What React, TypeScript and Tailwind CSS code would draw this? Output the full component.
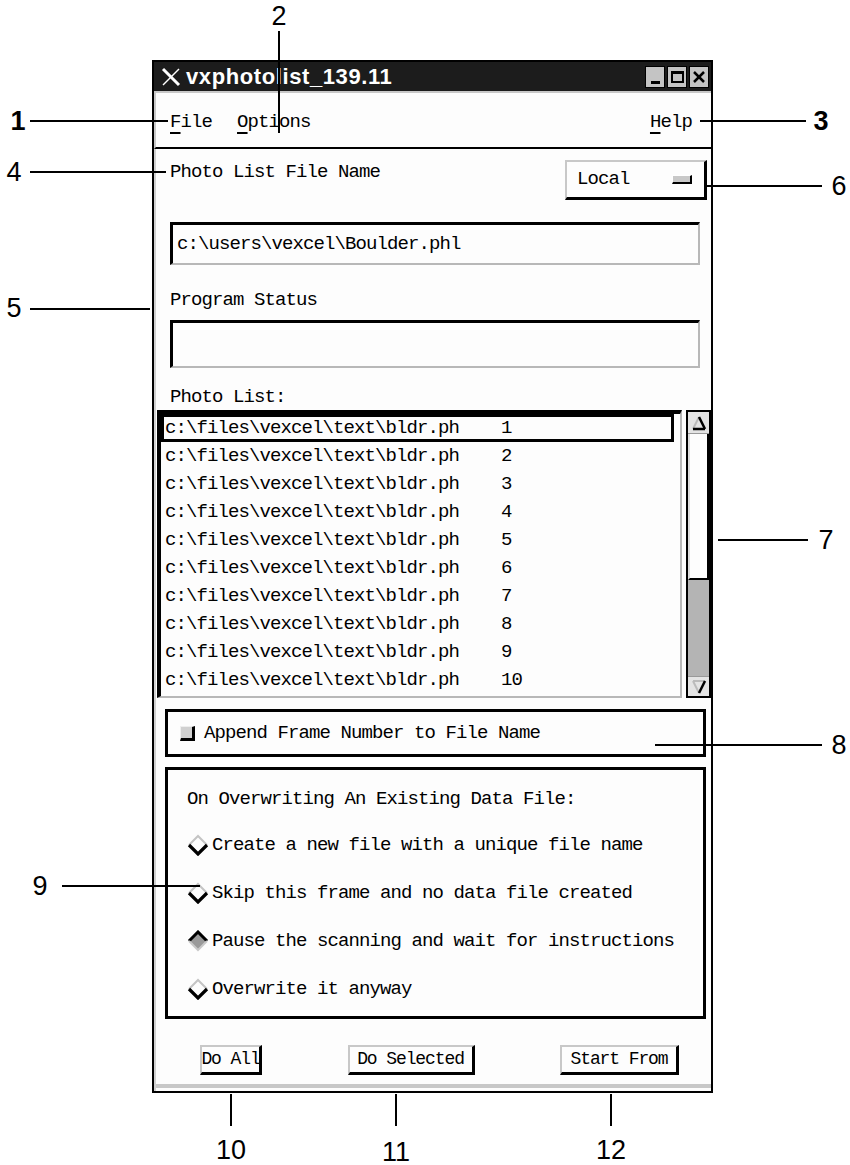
import React from "react";

const rows = Array.from({ length: 10 }, (_, i) => i + 1);

function Diamond({ selected }: { selected?: boolean }) {
  return (
    <svg width="22" height="22" viewBox="0 0 22 22" className="shrink-0">
      {selected ? (
        <>
          <polygon points="11,2 20,11 11,20 2,11" fill="#9a9a9a" />
          <polyline points="2,11 11,2 20,11" fill="none" stroke="#000" strokeWidth="3" />
          <polyline points="2,11 11,20 20,11" fill="none" stroke="#c8c8c8" strokeWidth="2" />
        </>
      ) : (
        <>
          <polyline points="2,11 11,2 20,11" fill="none" stroke="#c4c4c4" strokeWidth="2" />
          <polyline points="2,11 11,20 20,11" fill="none" stroke="#000" strokeWidth="3.2" />
        </>
      )}
    </svg>
  );
}

function Arrow({ up }: { up?: boolean }) {
  return (
    <svg width="18" height="18" viewBox="0 0 18 18">
      {up ? (
        <>
          <line x1="3" y1="15" x2="9" y2="3" stroke="#bbb" strokeWidth="2" />
          <line x1="9" y1="3" x2="15" y2="15" stroke="#000" strokeWidth="2.5" />
          <line x1="3" y1="15" x2="15" y2="15" stroke="#000" strokeWidth="2.5" />
        </>
      ) : (
        <>
          <line x1="3" y1="3" x2="15" y2="3" stroke="#bbb" strokeWidth="2" />
          <line x1="3" y1="3" x2="9" y2="15" stroke="#bbb" strokeWidth="2" />
          <line x1="15" y1="3" x2="9" y2="15" stroke="#000" strokeWidth="2.5" />
        </>
      )}
    </svg>
  );
}

function Field({ text, h }: { text?: string; h: string }) {
  return (
    <div
      className={`ml-[14px] mr-[11px] ${h} bg-[#fdfdfd] border-t-[3px] border-l-[3px] border-t-black border-l-black border-b-2 border-r-2 border-b-[#b8b8b8] border-r-[#b8b8b8] flex items-center pl-[4px]`}
    >
      {text}
    </div>
  );
}

function Btn({ label, w }: { label: string; w: string }) {
  return (
    <div
      className={`${w} h-[30px] bg-[#fdfdfd] border-t-2 border-l-2 border-t-[#c8c8c8] border-l-[#c8c8c8] border-b-[3px] border-r-[3px] border-b-black border-r-black flex items-center justify-center whitespace-nowrap text-[18px] tracking-[-1.1px]`}
    >
      {label}
    </div>
  );
}

function Option({ label, selected, first }: { label: string; selected?: boolean; first?: boolean }) {
  return (
    <div className={`${first ? "mt-[25px]" : "mt-[26px]"} h-[22px] flex items-center gap-[3px]`}>
      <Diamond selected={selected} />
      <span className="leading-[20px]">{label}</span>
    </div>
  );
}

function Window() {
  return (
    <div className="w-[561px] border-2 border-black bg-white flex flex-col">
      {/* title bar */}
      <div className="h-[29px] bg-[#1c1c1c] flex items-center pl-[6px] pr-[2px]">
        <svg width="22" height="20" viewBox="0 0 22 20" className="shrink-0">
          <line x1="3" y1="2" x2="19" y2="18" stroke="#fff" strokeWidth="3" />
          <line x1="19" y1="2" x2="3" y2="18" stroke="#fff" strokeWidth="1.5" />
        </svg>
        <span className="ml-[4px] text-white font-['Liberation_Sans',Arial,sans-serif] font-bold text-[22px] leading-none tracking-[0.6px]">
          vxphotolist_139.11
        </span>
        <div className="ml-auto flex gap-[2px]">
          <div className="w-[20px] h-[22px] bg-[#c4c4c4] border border-black flex items-end justify-center pb-[3px]">
            <div className="w-[9px] h-[3px] bg-black" />
          </div>
          <div className="w-[20px] h-[22px] bg-[#c4c4c4] border border-black flex items-center justify-center">
            <div className="w-[13px] h-[12px] border-2 border-black border-t-[3px]" />
          </div>
          <div className="w-[20px] h-[22px] bg-[#c4c4c4] border border-black flex items-center justify-center">
            <svg width="14" height="14" viewBox="0 0 14 14">
              <line x1="2" y1="2" x2="12" y2="12" stroke="#000" strokeWidth="2.5" />
              <line x1="12" y1="2" x2="2" y2="12" stroke="#000" strokeWidth="2.5" />
            </svg>
          </div>
        </div>
      </div>
      {/* menu bar */}
      <div className="h-[58px] border-t-2 border-l-2 border-[#c8c8c8] border-b-2 border-b-black bg-[#fdfdfd] flex items-center pl-[14px] pr-[19px] pt-[4px]">
        <span>
          <span className="underline underline-offset-[5px] decoration-2">F</span>ile
        </span>
        <span className="ml-[25px]">
          <span className="underline underline-offset-[5px] decoration-2">O</span>ptions
        </span>
        <span className="ml-auto">
          <span className="underline underline-offset-[5px] decoration-2">H</span>elp
        </span>
      </div>
      {/* body */}
      <div className="bg-[#fdfdfd] border-l-2 border-[#d0d0d0] flex flex-col">
        <div className="flex justify-between items-start pt-[11px] pl-[14px] pr-[4px]">
          <span className="mt-[2px] leading-[20px]">Photo List File Name</span>
          <div className="w-[142px] h-[40px] border-t-2 border-l-2 border-t-[#c8c8c8] border-l-[#c8c8c8] border-b-[3px] border-r-[3px] border-b-black border-r-black bg-[#fdfdfd] flex items-center pl-[10px] pr-[12px]">
            <span>Local</span>
            <span className="ml-auto w-[20px] h-[9px] bg-[#c8c8c8] border-t border-l border-t-white border-l-white border-b-2 border-r-2 border-b-black border-r-black" />
          </div>
        </div>
        <div className="mt-[22px]">
          <Field h="h-[43px]" text="c:\users\vexcel\Boulder.phl" />
        </div>
        <div className="mt-[25px] pl-[14px] leading-[20px]">Program Status</div>
        <div className="mt-[10px]">
          <Field h="h-[48px]" />
        </div>
        <div className="mt-[19px] pl-[14px] leading-[20px]">Photo List:</div>
        {/* list */}
        <div className="mt-[3px] flex pl-[1px]">
          <div className="w-[525px] h-[288px] border-t-[4px] border-l-[4px] border-t-black border-l-black border-b-2 border-r-2 border-b-[#b8b8b8] border-r-[#b8b8b8] bg-[#fdfdfd] flex flex-col">
            {rows.map((n) => (
              <div
                key={n}
                className={`h-[28px] shrink-0 flex items-center pl-[1px] whitespace-pre ${
                  n === 1 ? "border-[3px] border-black mr-[6px]" : "border-[3px] border-transparent"
                }`}
              >
                {`c:\\files\\vexcel\\text\\bldr.ph    ${n}`}
              </div>
            ))}
          </div>
          <div className="ml-[4px] w-[25px] h-[288px] border-2 border-black bg-[#b4b4b4] flex flex-col">
            <div className="h-[22px] bg-[#e4e4e4] flex items-center justify-center border-b border-[#999]">
              <Arrow up />
            </div>
            <div className="h-[146px] bg-[#fdfdfd] border-l-2 border-l-[#ddd] border-b-2 border-b-black border-r-2 border-r-black" />
            <div className="flex-1 bg-[#b4b4b4]" />
            <div className="h-[20px] bg-[#e4e4e4] flex items-center justify-center border-t border-[#999]">
              <Arrow />
            </div>
          </div>
        </div>
        {/* checkbox */}
        <div className="mt-[11px] ml-[9px] w-[541px] h-[48px] border-[3px] border-black flex items-center pl-[12px]">
          <span className="w-[15px] h-[15px] bg-[#d0d0d0] border-t border-l border-t-[#eee] border-l-[#eee] border-b-[3px] border-r-[3px] border-b-black border-r-black" />
          <span className="ml-[9px]">Append Frame Number to File Name</span>
        </div>
        {/* radio group */}
        <div className="mt-[10px] ml-[9px] w-[541px] h-[252px] border-[3px] border-black flex flex-col pl-[19px] pt-[19px]">
          <div className="leading-[20px]">On Overwriting An Existing Data File:</div>
          <Option first label="Create a new file with a unique file name" />
          <Option label="Skip this frame and no data file created" />
          <Option selected label="Pause the scanning and wait for instructions" />
          <Option label="Overwrite it anyway" />
        </div>
        {/* buttons */}
        <div className="mt-[26px] flex justify-between pl-[44px] pr-[32px]">
          <Btn label="Do All" w="w-[62px]" />
          <Btn label="Do Selected" w="w-[127px]" />
          <Btn label="Start From" w="w-[119px]" />
        </div>
        <div className="mt-[9px] h-[4px] bg-[#c8c8c8]" />
        <div className="h-[3px] bg-[#fdfdfd]" />
      </div>
    </div>
  );
}

function HLine({ x1, x2, y }: { x1: number; x2: number; y: number }) {
  return (
    <div
      className="absolute h-[2px] bg-black"
      style={{ left: x1, top: y - 1, width: x2 - x1 }}
    />
  );
}

function VLine({ x, y1, y2 }: { x: number; y1: number; y2: number }) {
  return (
    <div
      className="absolute w-[2px] bg-black"
      style={{ left: x - 1, top: y1, height: y2 - y1 }}
    />
  );
}

function Num({ n, x, y, bold }: { n: string; x: number; y: number; bold?: boolean }) {
  return (
    <div
      className={`absolute text-[27px] leading-none tracking-normal font-['Liberation_Sans',Arial,sans-serif] text-black -translate-x-1/2 -translate-y-1/2 ${
        bold ? "font-bold" : ""
      }`}
      style={{ left: x, top: y }}
    >
      {n}
    </div>
  );
}

function Callouts() {
  return (
    <>
      <Num n="1" x={18} y={121} bold />
      <HLine x1={30} x2={168} y={121} />
      <Num n="2" x={279} y={16} />
      <VLine x={279} y1={31} y2={133} />
      <Num n="3" x={821} y={121} bold />
      <HLine x1={700} x2={806} y={121} />
      <Num n="4" x={14} y={172} />
      <HLine x1={30} x2={166} y={172} />
      <Num n="5" x={14} y={308} />
      <HLine x1={30} x2={150} y={309} />
      <Num n="6" x={839} y={186} />
      <HLine x1={706} x2={822} y={186} />
      <Num n="7" x={826} y={540} />
      <HLine x1={718} x2={808} y={540} />
      <Num n="8" x={839} y={745} />
      <HLine x1={655} x2={822} y={745} />
      <Num n="9" x={40} y={886} />
      <HLine x1={62} x2={200} y={886} />
      <VLine x={231} y1={1094} y2={1126} />
      <Num n="10" x={231} y={1150} />
      <VLine x={396} y1={1094} y2={1126} />
      <Num n="11" x={396} y={1152} />
      <VLine x={611} y1={1094} y2={1126} />
      <Num n="12" x={611} y={1150} />
    </>
  );
}

export default function App() {
  return (
    <div className="relative w-[850px] h-[1165px] bg-white overflow-hidden font-['Liberation_Mono','DejaVu_Sans_Mono',monospace] text-[19px] tracking-[-0.9px] text-black">
      <div className="pt-[60px] pl-[152px]">
        <Window />
      </div>
      <Callouts />
    </div>
  );
}
